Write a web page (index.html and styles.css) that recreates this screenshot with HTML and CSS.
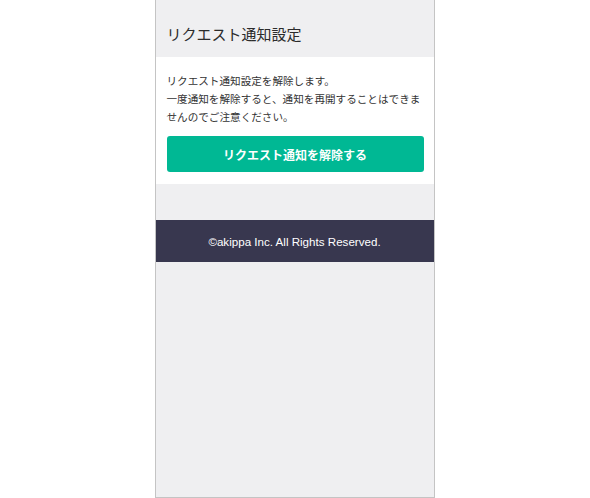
FILE: index.html
```html
<!DOCTYPE html>
<html lang="ja">
<head>
<meta charset="utf-8">
<title>リクエスト通知設定</title>
<link rel="stylesheet" href="styles.css">
</head>
<body>
<div class="frame">
  <header class="head">
    <h1 class="title">リクエスト通知設定</h1>
  </header>
  <section class="card">
    <p class="desc">リクエスト通知設定を解除します。<br>一度通知を解除すると、通知を再開することはできませんのでご注意ください。</p>
    <button class="btn" type="button">リクエスト通知を解除する</button>
  </section>
  <footer class="foot">©akippa Inc. All Rights Reserved.</footer>
</div>
</body>
</html>
```
FILE: styles.css
```css
html, body {
  margin: 0;
  padding: 0;
  background: #ffffff;
  height: 100%;
}
body {
  font-family: "Noto Sans CJK JP", "Noto Sans", sans-serif;
  color: #333333;
}
.frame {
  width: 278px;
  height: 497px;
  margin: 0 auto;
  border: 1px solid #c4c4c4;
  border-top: none;
  background: #efeff1;
  display: flex;
  flex-direction: column;
  position: relative;
  left: -0.5px;
}
.head {
  height: 57px;
  padding: 0 11px;
  display: flex;
  align-items: center;
}
.title {
  margin: 0;
  font-size: 15px;
  font-weight: normal;
  line-height: 20px;
  color: #2b2b2b;
  padding-top: 10px;
}
.card {
  background: #ffffff;
  padding: 15px 10px 12px 11px;
}
.desc {
  margin: 0;
  font-size: 10.6px;
  line-height: 18px;
  color: #333333;
}
.btn {
  display: block;
  width: 100%;
  height: 36px;
  margin-top: 10px;
  border: none;
  border-radius: 3px;
  background: #00b894;
  color: #ffffff;
  font-family: "Noto Sans CJK JP", "Noto Sans", sans-serif;
  font-size: 12px;
  font-weight: bold;
  padding: 0;
}
.foot {
  margin-top: 36px;
  height: 42px;
  background: #38374f;
  color: #ffffff;
  font-family: "Liberation Sans", Arial, sans-serif;
  font-size: 11.6px;
  display: flex;
  align-items: center;
  justify-content: center;
}
```
